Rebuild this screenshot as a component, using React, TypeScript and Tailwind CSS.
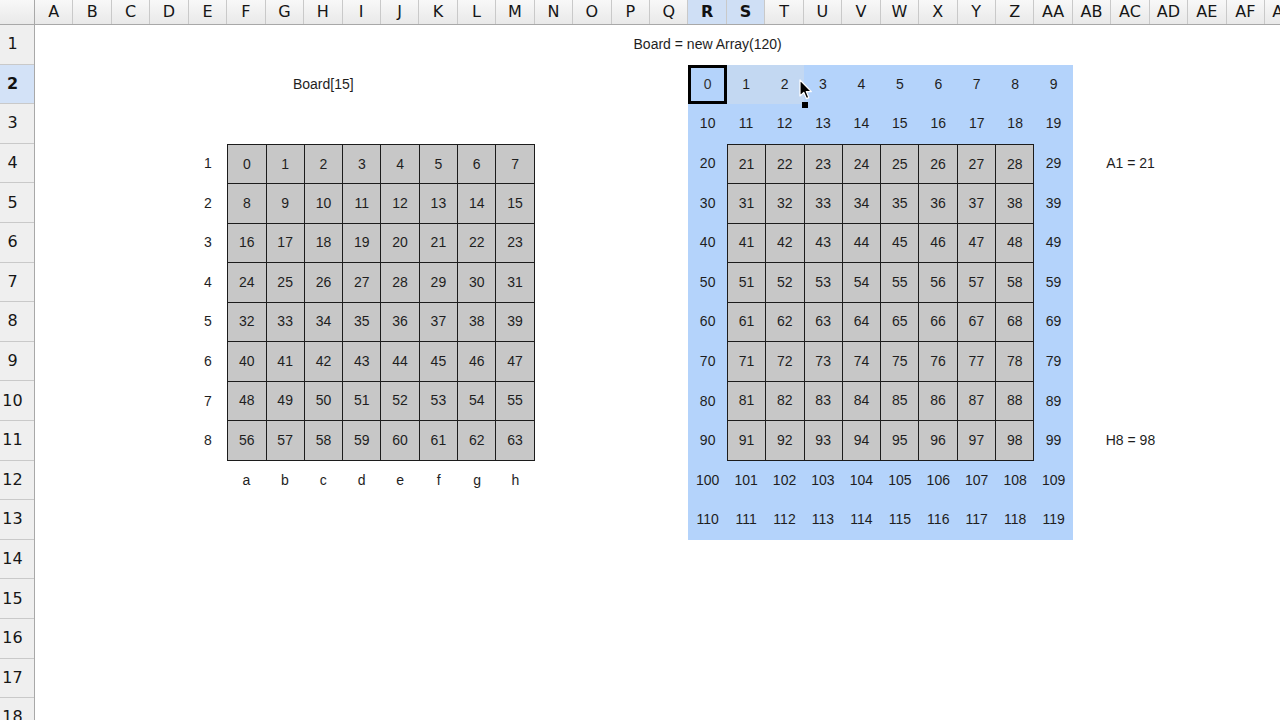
import React from "react";

const COLS = [
  "A","B","C","D","E","F","G","H","I","J","K","L","M","N","O","P","Q","R","S","T","U","V","W","X","Y","Z",
  "AA","AB","AC","AD","AE","AF","AG",
];
const ROWS = Array.from({ length: 18 }, (_, i) => i + 1);

const headerFont = { fontFamily: '"DejaVu Sans", "Liberation Sans", sans-serif' };
const cellFont = { fontFamily: '"Liberation Sans", Arial, sans-serif' };

function Board({ start }: { start: number }) {
  const cells: number[] = [];
  for (let r = 0; r < 8; r++) {
    for (let c = 0; c < 8; c++) {
      cells.push(start === 0 ? r * 8 + c : 21 + r * 10 + c);
    }
  }
  return (
    <div className="grid grid-cols-8 grid-rows-8 h-full w-full border-l border-t border-[#1c1c1c] bg-[#c7c7c7]">
      {cells.map((n) => (
        <div
          key={n}
          className="flex items-center justify-center border-r border-b border-[#1c1c1c] text-[14px] text-[#1e1e1e]"
        >
          {n}
        </div>
      ))}
    </div>
  );
}

function Cursor() {
  return (
    <svg
      className="absolute left-[111px] top-[14px]"
      width="14"
      height="22"
      viewBox="0 0 14 22"
    >
      <path
        d="M1 1 L1 17 L4.8 13.4 L7.4 19.6 L9.8 18.6 L7.3 12.6 L12.4 12.6 Z"
        fill="#000"
        stroke="#fff"
        strokeWidth="1.2"
        strokeLinejoin="round"
      />
    </svg>
  );
}

export default function App() {
  const sel: React.ReactNode[] = [];
  for (let n = 0; n < 120; n++) {
    const r = Math.floor(n / 10);
    const c = n % 10;
    if (r >= 2 && r <= 9 && c >= 1 && c <= 8) continue;
    if (n === 0) {
      sel.push(
        <div key={n} className="flex items-center justify-center border-[3px] border-black text-[14px] text-[#333]">
          0
        </div>
      );
    } else if (n === 1 || n === 2) {
      sel.push(
        <div key={n} className="flex items-center justify-center bg-[#c3d8f2] text-[14px] text-[#1e1e1e]">
          {n}
        </div>
      );
    } else {
      sel.push(
        <div key={n} className="flex items-center justify-center text-[14px] text-[#1e1e1e]">
          {n}
        </div>
      );
    }
    if (n === 19) {
      sel.push(
        <div key="board" className="col-[2/10] row-[3/11]">
          <Board start={21} />
        </div>
      );
    }
  }

  return (
    <div className="w-[1280px] h-[720px] overflow-hidden bg-white flex flex-col">
      {/* column header */}
      <div className="flex h-[25px] shrink-0 bg-gradient-to-b from-[#f8f8f8] to-[#e9e9e9] border-b border-[#a8a8a8]" style={headerFont}>
        <div className="w-[35px] shrink-0 border-r border-[#a8a8a8]" />
        {COLS.map((c) => {
          const active = c === "R" || c === "S";
          return (
            <div
              key={c}
              className={
                active
                  ? "w-[38.45px] shrink-0 flex items-center justify-center border-r border-[#c9c9c9] bg-[#cfdff5] text-[16px] text-[#111] font-semibold"
                  : "w-[38.45px] shrink-0 flex items-center justify-center border-r border-[#c9c9c9] text-[16px] text-[#161616]"
              }
            >
              {c}
            </div>
          );
        })}
      </div>

      <div className="flex flex-1 min-h-0">
        {/* row header */}
        <div className="w-[35px] shrink-0 flex flex-col bg-[#efefef] border-r border-[#a8a8a8]" style={headerFont}>
          {ROWS.map((r) => (
            <div
              key={r}
              className={
                r === 2
                  ? "h-[39.6px] shrink-0 flex items-center justify-center pr-[9px] border-b border-[#c9c9c9] bg-[#d3e2f7] text-[16px] text-[#111] font-semibold"
                  : "h-[39.6px] shrink-0 flex items-center justify-center pr-[9px] border-b border-[#c9c9c9] text-[16px] text-[#161616]"
              }
            >
              {r}
            </div>
          ))}
        </div>

        {/* sheet */}
        <div
          className="grid grid-cols-[repeat(33,38.45px)] grid-rows-[repeat(18,39.6px)] text-[#1e1e1e]"
          style={cellFont}
        >
          <div className="col-[18/19] row-[1/2] flex items-center justify-center whitespace-nowrap text-[14px]">
            Board = new Array(120)
          </div>
          <div className="col-[8/9] row-[2/3] flex items-center justify-center whitespace-nowrap text-[14px]">
            Board[15]
          </div>

          {/* left board labels */}
          <div className="col-[5/6] row-[4/12] flex flex-col">
            {[1, 2, 3, 4, 5, 6, 7, 8].map((n) => (
              <div key={n} className="flex-1 flex items-center justify-center text-[14px]">
                {n}
              </div>
            ))}
          </div>
          <div className="col-[6/14] row-[4/12]">
            <Board start={0} />
          </div>
          <div className="col-[6/14] row-[12/13] flex">
            {["a", "b", "c", "d", "e", "f", "g", "h"].map((l) => (
              <div key={l} className="flex-1 flex items-center justify-center text-[14px]">
                {l}
              </div>
            ))}
          </div>

          {/* selection */}
          <div className="col-[18/28] row-[2/14] relative grid grid-cols-10 grid-rows-12 bg-[#b4d3fb]">
            {sel}
            <div className="absolute left-[113.5px] top-[37px] w-[6px] h-[6px] bg-black" />
            <Cursor />
          </div>

          <div className="col-[29/30] row-[4/5] flex items-center justify-center whitespace-nowrap text-[14px]">
            A1 = 21
          </div>
          <div className="col-[29/30] row-[11/12] flex items-center justify-center whitespace-nowrap text-[14px]">
            H8 = 98
          </div>
        </div>
      </div>
    </div>
  );
}
